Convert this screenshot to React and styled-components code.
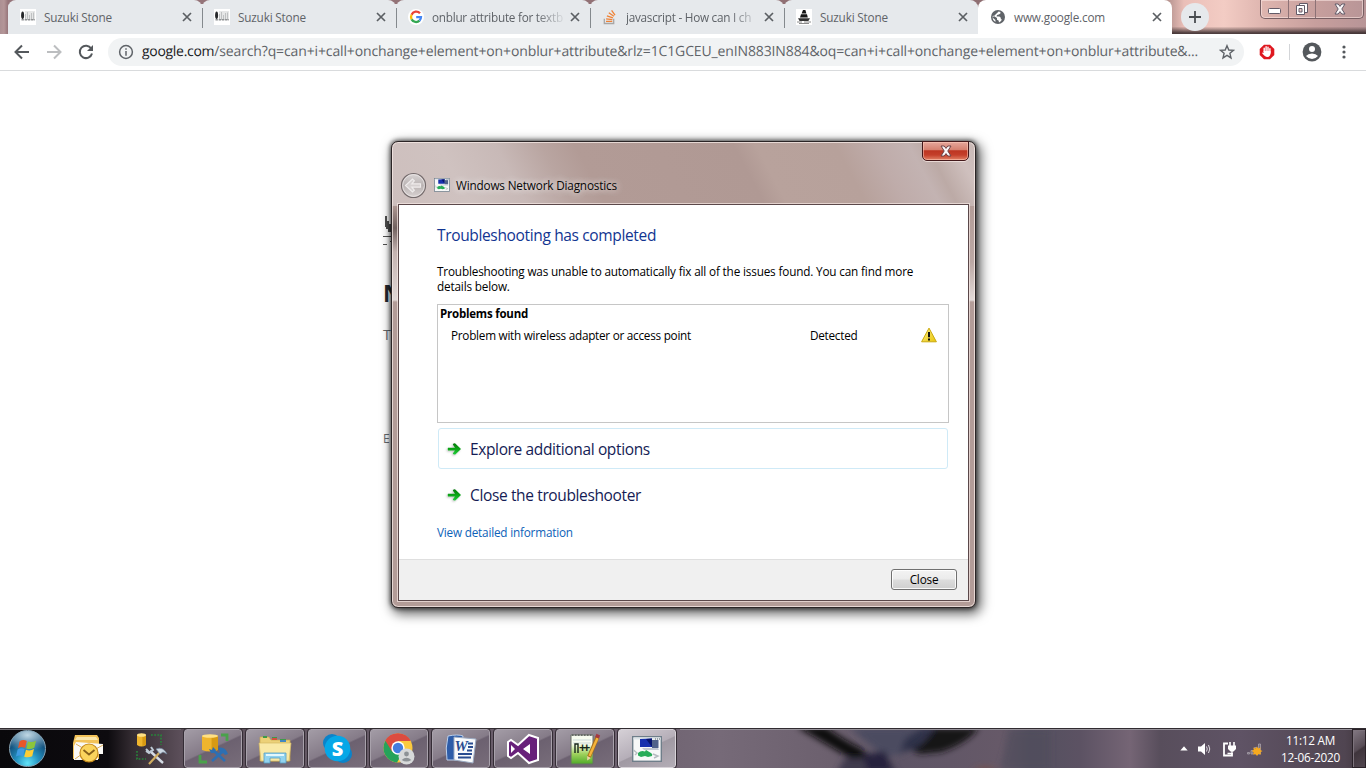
import React from "react";
import styled, { createGlobalStyle, css } from "styled-components";

const GlobalStyle = createGlobalStyle`
  * { box-sizing: border-box; }
  html, body { margin: 0; padding: 0; overflow: hidden; background: #fff; }
  body { font-family: "Open Sans", "Noto Sans", sans-serif; font-size: 11.75px; letter-spacing: -0.18px; }
  svg { display: block; flex: none; }
`;

const Desktop = styled.div`
  position: relative;
  width: 1366px;
  height: 768px;
  display: flex;
  flex-direction: column;
  overflow: hidden;
  background: #fff;
`;

/* Browser tabs */

const TabStrip = styled.div`
  height: 34px;
  flex: none;
  display: flex;
  padding-left: 8px;
  background:
    linear-gradient(to bottom, transparent 78%, rgba(50, 38, 40, 0.85) 97%) 1164px 0 / 202px 34px no-repeat,
    linear-gradient(to right, #a98885, #eabfb8 20px, #f3ccc4 60px, #ddb4ae 50%, #c79f9d 75%, #b89597) 1164px 0 / 202px 34px no-repeat,
    linear-gradient(to right, #ac9093, #b49698 4px, #96757a 8px, #8d6d70 1166px);
`;

const Tab = styled.div`
  position: relative;
  width: 194px;
  height: 34px;
  flex: none;
  display: flex;
  align-items: center;
  padding: 0 8px 0 12px;
  border-radius: 8px 8px 0 0;
  color: #5f6368;
  background: ${(p) => (p.$active ? "#fff" : "#e6e9ec")};
  ${(p) =>
    p.$divided &&
    css`
      &::after {
        content: "";
        position: absolute;
        right: -1px;
        top: 8px;
        width: 1px;
        height: 20px;
        background: #84898d;
        z-index: 1;
      }
    `}
`;

const TabGroup = styled.div`
  display: flex;
  width: 970px;
  border-radius: 8px 8px 8px 0;
  background: linear-gradient(to bottom, transparent 4px, #e6e9ec 4px);
`;

const Favicon = styled.span`
  width: 16px;
  height: 16px;
  margin-right: 8px;
  flex: none;
`;

const TabTitle = styled.span`
  flex: 1;
  white-space: nowrap;
  line-height: 18px;
  ${(p) => p.$fade && css`
    letter-spacing: -0.26px;
    mask-image: linear-gradient(to right, #000 104px, rgba(0, 0, 0, 0.15) 130px);
  `}
`;

const TabClose = styled.svg`
  width: 10px;
  height: 10px;
  margin-left: 6px;
  margin-right: 2px;
  stroke: #5b5f63;
  stroke-width: 1.7;
`;

const NewTab = styled.div`
  width: 28px;
  height: 28px;
  border-radius: 50%;
  margin: 3px 0 0 9px;
  background: #e6e9ec;
  display: flex;
  align-items: center;
  justify-content: center;
`;

const CaptionButtons = styled.div`
  display: flex;
  height: 19px;
  margin-left: 51px;
  border: 1px solid #785f63;
  border-top: 0;
  border-radius: 0 0 5px 5px;
  box-shadow: inset 0 0 0 1px rgba(255, 235, 232, 0.55);
`;

const CaptionButton = styled.div`
  width: ${(p) => p.$w}px;
  padding-top: ${(p) => p.$drop || 0}px;
  display: flex;
  align-items: center;
  justify-content: center;
  border-right: ${(p) => (p.$last ? "0" : "1px solid #8d7276")};
`;

/* Address bar */

const AddressBar = styled.div`
  height: 37px;
  flex: none;
  display: flex;
  align-items: center;
  padding-left: 14px;
  background: #fff;
  border-bottom: 1px solid #d9dbdd;
`;

const NavIcons = styled.div`
  display: flex;
  gap: 16px;
  width: 94px;
`;

const Omnibox = styled.div`
  width: 1136px;
  height: 28px;
  border-radius: 14px;
  display: flex;
  align-items: center;
  padding: 0 9px 0 10px;
  background: #f1f3f4;
`;

const Url = styled.div`
  flex: 1;
  margin-left: 8px;
  font-size: 14px;
  letter-spacing: -0.13px;
  line-height: 20px;
  white-space: nowrap;
  text-rendering: geometricPrecision;
  color: #5f6368;
`;

const UrlHost = styled.span`
  color: #202124;
  letter-spacing: -0.3px;
`;

const Extension = styled.div`
  display: flex;
  align-items: center;
  margin-left: 15px;
`;

const ToolbarRule = styled.div`
  width: 1px;
  height: 16px;
  margin: 0 12px 0 14px;
  background: #d3d5d8;
`;

const MenuDots = styled.svg`
  margin-left: 20px;
`;

/* Page behind the dialog */

const Page = styled.main`
  flex: 1;
  padding: 145px 0 0 383px;
  display: flex;
  flex-direction: column;
`;

const PageTitle = styled.div`
  margin-top: 29px;
  font-size: 23px;
  line-height: 36px;
  font-weight: 700;
  color: #24292f;
`;

const PageText = styled.div`
  margin-top: ${(p) => p.$top}px;
  font-size: ${(p) => p.$size}px;
  line-height: 20px;
  color: #66696c;
`;

/* Dialog window */

const Dialog = styled.section`
  position: absolute;
  left: 391px;
  top: 141px;
  width: 585px;
  height: 467px;
  display: flex;
  flex-direction: column;
  padding: 0 6px 6px;
  border: 1px solid #2b2526;
  border-radius: 7px;
  background:
    linear-gradient(to bottom, transparent 62px, rgba(60, 50, 50, 0.55) 86px, rgba(214, 202, 202, 0.5) 110px, rgba(235, 229, 228, 0.8) 158px, #b39c98 160px) 0 0 / 7px 100% no-repeat,
    linear-gradient(to bottom, transparent 60px, rgba(200, 185, 183, 0.4) 120px, rgba(235, 229, 228, 0.85) 158px, #b39c98 160px) 100% 0 / 7px 100% no-repeat,
    linear-gradient(to bottom, transparent 64px, #b39c97 160px) 0 0 / 100% 100% no-repeat,
    linear-gradient(62deg, #cdbfbd 0, #cfc2c0 70px, #c8b9b7 120px, #b9a5a1 160px, #b29b96 190px, #b09994 330px, #b8a29c 350px, #b7a19b 420px, #bfacaa 455px, #c3b3b2 485px, #bcaaa6 500px, #cfc0be 525px, #c9b9b6 100%) 0 0 / 100% 64px no-repeat,
    #b39c97;
  box-shadow:
    inset 0 0 0 1px rgba(247, 235, 231, 0.75),
    0 0 4px 1px rgba(0, 0, 0, 0.6),
    3px 4px 12px 2px rgba(0, 0, 0, 0.6);
`;

const TitleBar = styled.header`
  height: 62px;
  flex: none;
  display: flex;
  align-items: flex-end;
  padding: 0 0 5px 2px;
`;

const DialogClose = styled.div`
  position: absolute;
  right: 6px;
  top: -1px;
  width: 47px;
  height: 20px;
  display: flex;
  align-items: center;
  justify-content: center;
  border: 1px solid #43181a;
  border-radius: 0 0 5px 5px;
  background: linear-gradient(#e5a79b, #d57f6e 45%, #bd3522 48%, #c43f2a 72%, #e28267);
  box-shadow: inset 0 0 0 1px rgba(255, 205, 190, 0.55), 0 1px 0 rgba(255, 240, 235, 0.65);
`;

const TitleIcon = styled.div`
  margin: 0 6px 7px 7px;
`;

const DialogTitle = styled.div`
  line-height: 18px;
  margin-bottom: 5px;
  letter-spacing: -0.17px;
  color: #080808;
  text-shadow: 0 0 7px rgba(255, 255, 255, 0.8), 0 0 10px rgba(255, 255, 255, 0.6);
`;

const DialogPane = styled.div`
  flex: 1;
  display: flex;
  flex-direction: column;
  border: 1px solid #5b484a;
  background: #fff;
  box-shadow: 0 0 0 1px rgba(247, 232, 228, 0.7);
`;

const DialogBody = styled.div`
  height: 354px;
  padding: 18px 19px 0 38px;
  color: #000;
`;

const Heading = styled.h1`
  margin: 0;
  font-weight: 400;
  font-size: 15.5px;
  line-height: 25px;
  letter-spacing: -0.35px;
  color: #123591;
`;

const Message = styled.p`
  margin: 16px 0 10px;
  line-height: 15px;
  letter-spacing: -0.165px;
`;

const ProblemBox = styled.div`
  height: 119px;
  border: 1px solid #c6c6c6;
  padding-left: 2px;
`;

const ProblemHeading = styled.div`
  font-weight: 700;
  line-height: 18px;
  font-size: 11.5px;
  letter-spacing: -0.22px;
`;

const ProblemRow = styled.div`
  display: grid;
  grid-template-columns: 359px 111px 16px;
  align-items: center;
  margin-top: 3px;
  padding-left: 11px;
  line-height: 18px;
  letter-spacing: -0.26px;
`;

const CommandLink = styled.div`
  height: ${(p) => (p.$focused ? 41 : 39)}px;
  margin: ${(p) => (p.$focused ? "5px 1px 0 1px" : "6px 1px 0 1px")};
  padding-left: 7px;
  display: flex;
  align-items: center;
  border: 1px solid ${(p) => (p.$focused ? "#cfeaf7" : "transparent")};
  border-radius: 3px;
  font-size: 15.5px;
  letter-spacing: -0.365px;
  color: #151c55;
`;

const ArrowIcon = styled.svg`
  margin-right: 7px;
  filter: drop-shadow(-1px 1px 1px rgba(0, 0, 0, 0.25));
`;

const DetailLink = styled.div`
  margin-top: 9px;
  line-height: 18px;
  letter-spacing: -0.2px;
  color: #0d62b8;
`;

const DialogFooter = styled.footer`
  flex: 1;
  display: flex;
  justify-content: flex-end;
  padding: 9px 11px 0 0;
  background: #f0f0f0;
  border-top: 1px solid #dfdfdf;
`;

const PushButton = styled.div`
  width: 66px;
  height: 21px;
  display: flex;
  align-items: center;
  justify-content: center;
  border: 1px solid #707070;
  border-radius: 3px;
  line-height: 17px;
  padding-bottom: 1px;
  background: linear-gradient(#f3f3f3, #ebebeb 49%, #dddddd 51%, #cfcfcf);
  box-shadow: inset 0 0 0 1px rgba(255, 255, 255, 0.85);
  color: #000;
`;

/* Taskbar */

const Taskbar = styled.footer`
  position: relative;
  isolation: isolate;
  height: 40px;
  flex: none;
  display: flex;
  border-top: 1px solid #312c31;
  overflow: hidden;
  background: linear-gradient(to right, #09080b 0, #0d0b0f 108px, #332b31 132px, #5b4e59 180px, #645864 300px, #6b5f6d 600px, #766a78 720px, #6c606e 830px, #5e5566 900px, #665968 1000px, #53505f 1030px, #5c5263 1080px, #756575 1130px, #584e5c 1160px, #5f5365 1240px, #504551 1345px, #3e343b 1366px);
`;

const Wallpaper = styled.svg`
  position: absolute;
  left: 680px;
  top: 0;
  z-index: -1;
  border-top: 1px solid #97929a;
`;

const Launcher = styled.div`
  width: ${(p) => p.$w}px;
  flex: none;
  display: flex;
  justify-content: center;
  align-items: center;
  box-shadow: inset 0 1px 0 #6f6b70;
`;

const StartOrb = styled.div`
  width: 37px;
  height: 37px;
  border-radius: 50%;
  display: flex;
  align-items: center;
  justify-content: center;
  border: 1px solid #85a3b5;
  background:
    radial-gradient(ellipse 70% 45% at 50% 12%, rgba(230, 246, 252, 0.8), rgba(255, 255, 255, 0)),
    radial-gradient(circle at 50% 92%, #62e3f7 0, #2391c0 32%, #14537f 62%, #3d6f90 100%);
`;

const TaskButtons = styled.div`
  display: flex;
  gap: 4px;
  height: 39px;
  margin-left: 3px;
`;

const TaskButton = styled.div`
  width: 58px;
  height: 39px;
  display: flex;
  align-items: center;
  justify-content: center;
  border: 1px solid ${(p) => (p.$active ? "#d8d3d9" : "#a8a1ab")};
  outline: 1px solid #342c35;
  border-radius: 3px;
  background: ${(p) =>
    p.$active
      ? "linear-gradient(155deg, #d5d0d6, #b5aeb8 50%, #a099a3 52%, #b3adb6)"
      : "linear-gradient(155deg, #a39ca6, #857b88 48%, #6c6170 51%, #786d7a)"};
`;

const Tray = styled.div`
  flex: 1;
  display: flex;
  align-items: center;
  justify-content: flex-end;
`;

const TrayIcons = styled.div`
  display: flex;
  align-items: center;
  gap: 8px;
`;

const Clock = styled.div`
  width: 59px;
  margin: 0 12px 0 18px;
  text-align: center;
  line-height: 17px;
  letter-spacing: -0.25px;
  white-space: nowrap;
  color: #fff;
`;

const ShowDesktop = styled.div`
  width: 14px;
  height: 39px;
  border: 1px solid #2a2228;
  box-shadow: inset 1px 1px 0 #7d737c;
  background: linear-gradient(145deg, #837983, #574c55 50%, #3f353c 55%, #51464f);
`;

/* Icons */

const StoneIcon = () => (
  <svg width="16" height="16">
    <rect width="16" height="16" fill="#fff" />
    <path d="M5 2H15V11H5Z" fill="#e6e7e7" />
    <ellipse cx="2.6" cy="6.2" rx="1.5" ry="3.8" fill="#26282a" />
    <path d="M5.5 11V5M7.5 11V3M9.5 11V6M11.5 11V4M13.5 11V3.5" stroke="#bfc1c2" strokeWidth="1" />
    <path d="M1.5 10.8H15" stroke="#8f9193" strokeWidth="1.4" strokeDasharray="2.4 .8" />
  </svg>
);

const GoogleIcon = () => (
  <svg width="16" height="16">
    <circle cx="8" cy="8" r="8" fill="#fff" />
    <g fill="none" strokeWidth="2.3">
      <path d="M12 4.3A5 5 0 0 0 3.6 5.7" stroke="#ea4335" />
      <path d="M3.6 5.7A5 5 0 0 0 3.6 10.4" stroke="#fbbc05" />
      <path d="M3.6 10.4A5 5 0 0 0 11.5 11.6" stroke="#34a853" />
      <path d="M11.5 11.6A4.9 4.9 0 0 0 13 8.1H8.2" stroke="#4285f4" />
    </g>
  </svg>
);

const StackIcon = () => (
  <svg width="16" height="16" fill="none">
    <path d="M2.3 9.8V14.5H11.7V9.8" stroke="#a8a6a5" strokeWidth="1.3" />
    <path d="M4 12.3H10.3M4.1 9.8L10.4 10.6M4.9 6.8L10.9 8.9M6.8 3.7L11.9 7.2M9.6 1.4L13 6.2" stroke="#ef8236" strokeWidth="1.3" />
  </svg>
);

const ShipIcon = () => (
  <svg width="16" height="16">
    <rect width="16" height="16" fill="#fff" />
    <path d="M7 1H9.4L10.4 4.6H5.6ZM5 5.2H11L11.8 8.4H4Z" fill="#151515" />
    <path d="M2 9.2H14L12.4 12H3.6Z" fill="#333" />
    <path d="M1 13H6M8 13H15M3 14.5H13" stroke="#8a8a8a" fill="none" />
  </svg>
);

const GlobeIcon = () => (
  <svg width="16" height="16">
    <circle cx="8" cy="8" r="7" fill="#5f6368" />
    <path d="M8.6 2.5L10.4 3V4.4L8.8 5.6L7 6L6.6 7.4H9.4L10.8 8.8V10.2L12 10.6A5.6 5.6 0 0 1 9 13.4L8.6 11.4L7 10.8V9L3 6.6A5.5 5.5 0 0 0 2.5 8.4L5.4 11V13A5.6 5.6 0 0 1 2.5 8.4" fill="#fff" />
  </svg>
);

const NetworkWindowIcon = ({ size = 15 }) => (
  <svg width={size} height={(size * 13) / 15} viewBox="0 0 30 26">
    <rect x=".7" y=".7" width="28.6" height="24.6" fill="#f7f8f8" stroke="#6f7e8a" strokeWidth="1.4" />
    <path d="M1.5 2.5H28.5" stroke="#dfe5e9" strokeWidth="2" />
    <path d="M23 3H28" stroke="#53616b" strokeDasharray="1 1" />
    <path d="M8 3L20 2.5V11L8 11Z" fill="#1730ae" />
    <path d="M14 3L20 2.5V11Z" fill="#07146e" />
    <path d="M20 4H26.5V12H20Z" fill="#51628a" />
    <path d="M10 12H26L27 14H12Z" fill="#c3c9d2" />
    <path d="M6 17Q9 14 13 15.5L14 14L19 17Q21 18 20 20L16 21L13 20L9 21L6 19.5Z" fill="#27ac58" />
    <path d="M1.5 14L5 17L3 19M21 18L26 20L22 22" stroke="#b5bbc0" fill="none" strokeWidth="1.4" />
  </svg>
);

const GreenArrow = () => (
  <ArrowIcon width="17" height="16" viewBox="0 0 17 16">
    <defs>
      <linearGradient id="arrowFill" x1="0" y1="0" x2="0" y2="1">
        <stop offset="0" stopColor="#057a0b" />
        <stop offset=".5" stopColor="#0ba516" />
        <stop offset="1" stopColor="#21ce3b" />
      </linearGradient>
    </defs>
    <path d="M2 6.8H9L6.8 3.4Q7.8 1.9 9.3 2.5L15 8L9.3 13.5Q7.5 13.9 6.8 12.6L9 9.5H2Q1.5 8 2 6.8Z" fill="url(#arrowFill)" />
  </ArrowIcon>
);

const WarningIcon = () => (
  <svg width="16" height="16">
    <defs>
      <linearGradient id="warnFill" x1="0" y1="0" x2="1" y2="1">
        <stop offset="0" stopColor="#fff28a" />
        <stop offset="1" stopColor="#e8c408" />
      </linearGradient>
    </defs>
    <path d="M8 1.1L15.4 14.8H.6Z" fill="url(#warnFill)" stroke="#c9a90f" strokeLinejoin="round" />
    <path d="M8 5V10.3M8 11.6V13.5" stroke="#111" strokeWidth="2" />
  </svg>
);

const CrossGlyph = ({ outline }) => (
  <svg width="14" height="12" viewBox="0 0 14 12">
    <path d="M2 1H5.2L7 3.4L8.8 1H12L8.8 6L12 11H8.8L7 8.6L5.2 11H2L5.2 6Z" fill="#fbf8f9" stroke={outline} />
  </svg>
);

const WindowsFlag = () => (
  <svg width="25" height="24" viewBox="0 0 25 24">
    <path d="M4.5 4.5Q8 1.8 11.8 4L10 11Q6.5 9 3 11.2Z" fill="#e8562a" />
    <path d="M13 4.4Q17 6 21 3.7L19.3 10.8Q15.2 12.8 11.3 11.4Z" fill="#8cc63b" />
    <path d="M2.6 12.4Q6.3 10.2 9.7 12.3L7.9 19.4Q4.5 17.5 1 19.6Z" fill="#3e9be2" />
    <path d="M11 12.8Q14.9 14.3 19 12.1L17.2 19.2Q13.2 21.1 9.2 19.8Z" fill="#fccd35" />
  </svg>
);

const OutlookIcon = () => (
  <svg width="32" height="30" viewBox="0 0 32 30">
    <path d="M3 1H25L27 4V25H1V9Z" fill="#f3c35a" />
    <path d="M5 3H24L26 6H3Z" fill="#fbe7ac" />
    <path d="M4 8L31 10V20H26V26H2V12Z" fill="#faf9f6" />
    <path d="M4 10L14 16M31 11L22 16M3 25L10 20" stroke="#dcae58" fill="none" />
    <circle cx="17" cy="19" r="9" fill="#fbd45d" stroke="#c58a1c" strokeWidth="1.2" />
    <path d="M11.5 16L17 20.5L22.5 16" stroke="#86601b" strokeWidth="1.8" fill="none" />
  </svg>
);

const Cylinder = ({ x, y, w, h }) => (
  <g>
    <path d={`M${x} ${y}V${y + h}Q${x + w / 2} ${y + h + 3} ${x + w} ${y + h}V${y}Z`} fill="#efb52d" />
    <path d={`M${x + w * 0.6} ${y}V${y + h + 1}L${x + w} ${y + h}V${y}Z`} fill="#d89a13" />
    <ellipse cx={x + w / 2} cy={y} rx={w / 2} ry="1.8" fill="#ffe084" />
  </g>
);

const SqlToolsIcon = () => (
  <svg width="32" height="32" viewBox="0 0 32 32">
    <Cylinder x={1} y={2} w={9} h={10} />
    <path d="M15 2H25V12M1 18V26H10" stroke="#27863a" strokeWidth="1.6" strokeDasharray="1.8 1.4" fill="none" />
    <path d="M14 18L27 30" stroke="#d5dce5" strokeWidth="2.4" />
    <path d="M10 16L13 19M15 14L17 17L13 20L10 18" stroke="#becad5" strokeWidth="2" fill="none" />
    <path d="M13 31L25 18" stroke="#d0ad60" strokeWidth="2.2" />
    <path d="M20 16Q27 13 31 21L27 19L24 21Z" fill="#cdd8e3" stroke="#71849a" strokeWidth=".7" />
  </svg>
);

const SsmsIcon = () => (
  <svg width="31" height="31" viewBox="0 0 31 31">
    <Cylinder x={4} y={3} w={16} h={14} />
    <path d="M23 2H29V8M2 22V29H9" stroke="#4aa14b" strokeWidth="2.8" fill="none" />
    <path d="M15 17L27 28M14 28L25 18" stroke="#2d6fb2" strokeWidth="2.6" />
    <path d="M11 16L14 17L15 14L18 17L16 20H13ZM20 15Q27 13 30 21L27 22L25 20L23 21Z" fill="#2d6fb2" />
  </svg>
);

const ExplorerIcon = () => (
  <svg width="34" height="30" viewBox="0 0 34 30">
    <path d="M2 3H11L13 6H32V27H2Z" fill="#ecd178" stroke="#c7a64c" strokeWidth=".7" />
    <path d="M5 3H9M14 4H19M22 6H28" stroke="#3e9a49" strokeWidth="2" />
    <path d="M14 5H19" stroke="#d4513c" strokeWidth="2" />
    <path d="M22 7H28" stroke="#4488c0" strokeWidth="2" />
    <path d="M1 9H33L31 27H3Z" fill="#f9e9a6" stroke="#d4b963" strokeWidth=".7" />
    <path d="M6 29V19H28V29H22V24H12V29Z" fill="#92d3ef" stroke="#559dc3" strokeWidth=".8" />
    <path d="M8 21H26" stroke="#e2f7fd" strokeWidth="2" />
  </svg>
);

const SkypeLetter = styled.text`
  font: 800 20px "Open Sans", sans-serif;
  fill: #fff;
`;

const SkypeIcon = () => (
  <svg width="31" height="31" viewBox="0 0 31 31">
    <circle cx="10" cy="10" r="9" fill="#0b83c9" />
    <circle cx="21" cy="21" r="9" fill="#0b83c9" />
    <circle cx="15.5" cy="15.5" r="12.8" fill="#05a7e7" />
    <SkypeLetter x="15.5" y="22.6" textAnchor="middle">S</SkypeLetter>
  </svg>
);

const ChromeIcon = () => (
  <svg width="32" height="32" viewBox="0 0 32 32">
    <circle cx="15" cy="15" r="14.5" fill="#fbca3e" />
    <path d="M15 15L2.4 7.8A14.5 14.5 0 0 1 27.6 7.8H15Z" fill="#dc4c3f" />
    <path d="M2.4 7.8A14.5 14.5 0 0 0 14 29.5L20 19L15 15Z" fill="#25a35a" />
    <path d="M2.4 7.8L9 18.5L15 15V8H27.6A14.5 14.5 0 0 0 2.4 7.8" fill="#dc4c3f" />
    <circle cx="15" cy="15" r="6.7" fill="#fff" />
    <circle cx="15" cy="15" r="5.2" fill="#437ddf" />
    <circle cx="23.5" cy="23.5" r="8" fill="#d7d9da" />
    <circle cx="23.5" cy="21" r="2.4" fill="#8d9296" />
    <path d="M18.7 27Q23.5 22.5 28.3 27Q23.5 30.2 18.7 27Z" fill="#8d9296" />
  </svg>
);

const WordLetter = styled.text`
  font: italic 700 15px "Liberation Serif", serif;
  fill: #294c90;
`;

const WordIcon = () => (
  <svg width="32" height="30" viewBox="0 0 32 30">
    <path d="M3 2Q13 0 18 2L14 26H2Q0 14 3 2Z" fill="#2d5ca8" stroke="#bdd0eb" />
    <path d="M9 3L31 5L28 29L9 26Z" fill="#f8fafc" stroke="#9baac2" />
    <WordLetter x="9.5" y="17">W</WordLetter>
    <path d="M23 9.5H28M23 13H28M22 16.5H27M13 20H27M13 23.5H26" stroke="#294c90" strokeWidth="1.8" />
  </svg>
);

const VisualStudioIcon = () => (
  <svg width="34" height="32" viewBox="0 0 34 32">
    <path d="M23 2L32 5V27L23 30L12 20L5 25L2 23V9L5 7L12 12Z" fill="#68217a" stroke="#fff" strokeWidth="2" />
    <path d="M5 12L9 16L5 20ZM24 11V21L17 16Z" fill="#fff" />
  </svg>
);

const NotepadLetter = styled.text`
  font: 700 12px "Liberation Sans", sans-serif;
  fill: #17251a;
`;

const NotepadIcon = () => (
  <svg width="32" height="32" viewBox="0 0 32 32">
    <defs>
      <linearGradient id="noteFill" x1="0" y1="0" x2="0" y2="1">
        <stop offset=".3" stopColor="#f7fbef" />
        <stop offset=".65" stopColor="#a0d25e" />
        <stop offset="1" stopColor="#4fab28" />
      </linearGradient>
    </defs>
    <path d="M2 2H24V31H2Z" fill="url(#noteFill)" stroke="#696e66" />
    <path d="M3 2H23" stroke="#686b68" strokeWidth="2" strokeDasharray="1.5 1.5" />
    <path d="M4 7H22M4 10H22" stroke="#b8cbd2" strokeWidth=".7" />
    <path d="M6 20V11H9V20" stroke="#17251a" strokeWidth="1.4" fill="none" />
    <NotepadLetter x="10" y="19" textLength="11">++</NotepadLetter>
    <path d="M28.5 4L20 24" stroke="#a86d1c" strokeWidth="4" />
    <path d="M28.5 5L20.5 23" stroke="#f4b43b" strokeWidth="2.4" />
    <path d="M26.8 2.4L30.5 4" stroke="#a63941" strokeWidth="3.4" />
    <path d="M18.2 23V27.5L21.8 25Z" fill="#ead1a5" />
  </svg>
);

const tabs = [
  { title: "Suzuki Stone", Icon: StoneIcon },
  { title: "Suzuki Stone", Icon: StoneIcon },
  { title: "onblur attribute for textb", Icon: GoogleIcon, fade: true },
  { title: "javascript - How can I ch", Icon: StackIcon, fade: true },
  { title: "Suzuki Stone", Icon: ShipIcon },
];

const BrowserTab = ({ title, Icon, fade, active, divided }) => (
  <Tab $active={active} $divided={divided}>
    <Favicon><Icon /></Favicon>
    <TabTitle $fade={fade}>{title}</TabTitle>
    <TabClose viewBox="0 0 10 10"><path d="M1 1L9 9M9 1L1 9" /></TabClose>
  </Tab>
);

const taskIcons = [SsmsIcon, ExplorerIcon, SkypeIcon, ChromeIcon, WordIcon, VisualStudioIcon, NotepadIcon];

export default function App() {
  return (
    <Desktop>
      <GlobalStyle />
      <TabStrip>
        <TabGroup>
          {tabs.map((tab, i) => (
            <BrowserTab key={i} {...tab} divided={i < tabs.length - 1} />
          ))}
        </TabGroup>
        <BrowserTab title="www.google.com" Icon={GlobeIcon} active />
        <NewTab>
          <svg width="12" height="12" viewBox="0 0 12 12"><path d="M6 0V12M0 6H12" stroke="#484c50" strokeWidth="1.8" /></svg>
        </NewTab>
        <CaptionButtons>
          <CaptionButton $w={28} $drop={4}>
            <svg width="13" height="6"><rect x=".5" y=".5" width="12" height="5" rx="1" fill="#fff" stroke="#625b68" /></svg>
          </CaptionButton>
          <CaptionButton $w={27}>
            <svg width="12" height="12" viewBox="0 0 12 12">
              <path d="M3.5.5H11.5V9.5H3.5Z" fill="#fff" stroke="#625b68" />
              <path d="M.5 2.5H8.5V11.5H.5Z" fill="#fff" stroke="#625b68" />
              <path d="M3 5.5H6V9H3Z" fill="#e9c9c5" stroke="#625b68" />
            </svg>
          </CaptionButton>
          <CaptionButton $w={47} $last><CrossGlyph outline="#625b68" /></CaptionButton>
        </CaptionButtons>
      </TabStrip>

      <AddressBar>
        <NavIcons>
          <svg width="16" height="16" fill="none" stroke="#54585c" strokeWidth="2"><path d="M15 8H2M8 1.5L1.5 8L8 14.5" /></svg>
          <svg width="16" height="16" fill="none" stroke="#bcbec0" strokeWidth="2"><path d="M1 8H14M8 1.5L14.5 8L8 14.5" /></svg>
          <svg width="16" height="16" fill="none" stroke="#54585c" strokeWidth="2">
            <path d="M13.2 4.5A6.2 6.2 0 1 0 14 9.5" />
            <path d="M15 1V7H9Z" fill="#54585c" stroke="none" />
          </svg>
        </NavIcons>
        <Omnibox>
          <svg width="16" height="16" fill="none" stroke="#5f6368" strokeWidth="1.5">
            <circle cx="8" cy="8" r="6.4" /><path d="M8 7V11.7M8 4.2V5.8" />
          </svg>
          <Url>
            <UrlHost>google.com</UrlHost>
            /search?q=can+i+call+onchange+element+on+onblur+attribute&amp;rlz=1C1GCEU_enIN883IN884&amp;oq=can+i+call+onchange+element+on+onblur+attribute&amp;...
          </Url>
          <svg width="16" height="16" fill="none" stroke="#5f6368" strokeWidth="1.4">
            <path d="M8 1.7L9.8 6L14.5 6.3L10.9 9.3L12 13.9L8 11.4L4 13.9L5.1 9.3L1.5 6.3L6.2 6Z" />
          </svg>
        </Omnibox>
        <Extension>
          <svg width="16" height="16" viewBox="0 0 16 16">
            <path d="M5 .7H11L15.3 5V11L11 15.3H5L.7 11V5Z" fill="#df1820" />
            <path d="M5.2 8V4.2M7.1 7V2.8M9 7V3.2M10.9 9V4.7" stroke="#fff" strokeWidth="1.4" strokeLinecap="round" />
            <path d="M4.5 7H11.5Q12 13 8.3 13Q6 13 3 8.9Q3.8 8 5 9Z" fill="#fff" />
          </svg>
          <ToolbarRule />
          <svg width="20" height="20" viewBox="0 0 20 20">
            <circle cx="10" cy="10" r="9.4" fill="#54585c" />
            <circle cx="10" cy="7" r="3" fill="#fff" />
            <path d="M4 14Q6 11.5 10 11.5T16 14Q13.5 17 10 17T4 14Z" fill="#fff" />
          </svg>
          <MenuDots width="4" height="16" fill="#54585c">
            <circle cx="2" cy="3" r="1.6" /><circle cx="2" cy="8" r="1.6" /><circle cx="2" cy="13" r="1.6" />
          </MenuDots>
        </Extension>
      </AddressBar>

      <Page>
        <svg width="9" height="30" viewBox="0 0 9 30">
          <path d="M2 0H4V5H6V8H9V16H5V13H3V11H2Z" fill="#505050" />
          <path d="M0 20.5H9M0 28.5H4M7 25.5H9" stroke="#505050" />
        </svg>
        <PageTitle>N</PageTitle>
        <PageText $top={14} $size={14}>T</PageText>
        <PageText $top={84} $size={12}>E</PageText>
      </Page>

      <Dialog>
        <DialogClose><CrossGlyph outline="#6c4246" /></DialogClose>
        <TitleBar>
          <svg width="27" height="27" viewBox="0 0 27 27">
            <defs>
              <linearGradient id="backFill" x1="0" y1="0" x2="0" y2="1">
                <stop offset="0" stopColor="#d9d5d5" />
                <stop offset=".5" stopColor="#bab3b3" />
                <stop offset="1" stopColor="#d9d3d2" />
              </linearGradient>
            </defs>
            <circle cx="13.5" cy="13.5" r="12" fill="url(#backFill)" stroke="#746b6c" strokeWidth="1.2" />
            <circle cx="13.5" cy="13.5" r="10.9" fill="none" stroke="#eee8e8" strokeWidth=".8" />
            <path d="M5.5 13.5L12.5 7L14.3 8.8L11.8 11.8H20.5V15.2H11.8L14.3 18.2L12.5 20Z" fill="#d6d1d1" stroke="#efecec" strokeWidth="1.2" />
          </svg>
          <TitleIcon><NetworkWindowIcon size={16} /></TitleIcon>
          <DialogTitle>Windows Network Diagnostics</DialogTitle>
        </TitleBar>
        <DialogPane>
          <DialogBody>
            <Heading>Troubleshooting has completed</Heading>
            <Message>
              Troubleshooting was unable to automatically fix all of the issues found. You can find more<br />
              details below.
            </Message>
            <ProblemBox>
              <ProblemHeading>Problems found</ProblemHeading>
              <ProblemRow>
                <span>Problem with wireless adapter or access point</span>
                <span>Detected</span>
                <WarningIcon />
              </ProblemRow>
            </ProblemBox>
            <CommandLink $focused><GreenArrow />Explore additional options</CommandLink>
            <CommandLink><GreenArrow />Close the troubleshooter</CommandLink>
            <DetailLink>View detailed information</DetailLink>
          </DialogBody>
          <DialogFooter><PushButton>Close</PushButton></DialogFooter>
        </DialogPane>
      </Dialog>

      <Taskbar>
        <Wallpaper width="686" height="40" viewBox="680 729 686 39">
          <defs>
            <filter id="soft" x="-20%" y="-20%" width="140%" height="140%">
              <feGaussianBlur stdDeviation="3" />
            </filter>
          </defs>
          <g filter="url(#soft)">
            <path d="M850 727H930L905 752L885 756Z" fill="#4b4c61" />
            <path d="M845 757L885 752L900 775H835Z" fill="#3f3b4e" />
            <path d="M862 754L885 750L892 770H868Z" fill="#25223c" />
            <path d="M797 726H826Q842 738 862 748L868 756L852 758Q830 745 797 726Z" fill="#0c0a0c" />
            <path d="M933 727H979Q966 743 941 751L920 753L910 748Q926 744 933 727Z" fill="#171318" />
            <path d="M905 738L922 727H936L918 746L900 752Z" fill="#2f3049" />
            <path d="M1010 729H1050V768H1000Z" fill="#4f4d5c" opacity=".6" />
            <path d="M972 769Q985 763 998 769Z" fill="#80503f" />
          </g>
        </Wallpaper>
        <Launcher $w={54}><StartOrb><WindowsFlag /></StartOrb></Launcher>
        <Launcher $w={68}><OutlookIcon /></Launcher>
        <Launcher $w={59}><SqlToolsIcon /></Launcher>
        <TaskButtons>
          {taskIcons.map((Icon, i) => (
            <TaskButton key={i}><Icon /></TaskButton>
          ))}
          <TaskButton $active><NetworkWindowIcon size={30} /></TaskButton>
        </TaskButtons>
        <Tray>
          <TrayIcons>
            <svg width="8" height="5"><path d="M4 .3L7.7 4.5H.3Z" fill="#fff" /></svg>
            <svg width="18" height="16" viewBox="0 0 18 16">
              <path d="M2 5.5H5L9 2V14L5 10.5H2Z" fill="#fff" />
              <path d="M10.5 5.5Q12 8 10.5 10.5M12.5 4Q15 8 12.5 12" stroke="#e1dce3" fill="none" />
            </svg>
            <svg width="16" height="16" viewBox="0 0 16 16" fill="none">
              <path d="M6 2.5H2V14.5H10V12" stroke="#fff" strokeWidth="1.8" />
              <path d="M8 1V5M12 1V5" stroke="#fff" strokeWidth="1.6" />
              <path d="M6 4.5H14V8L11.5 10.5H8.5L6 8Z" fill="#fff" />
              <path d="M10 10V12.5H5.5" stroke="#fff" strokeWidth="1.3" />
            </svg>
            <svg width="17" height="16" viewBox="0 0 17 16">
              <path d="M1.5 13V11.5H3.5V13ZM5 13V9.5H7V13ZM8.5 13V6.5H10.5V13ZM12.5 13V3H14.5V13Z" fill="#77707d" stroke="#a7a0aa" strokeWidth=".8" />
              <path d="M11 5.5L12.2 7.5L14.5 6.5L14.2 9L16.5 10L14.4 11.2L15 13.5L12.6 13L11 15L9.5 13L7 13.7L7.7 11.3L5.7 10L7.8 8.8L7.2 6.5L9.6 7.4Z" fill="#f6a91f" />
            </svg>
          </TrayIcons>
          <Clock>11:12 AM<br />12-06-2020</Clock>
          <ShowDesktop />
        </Tray>
      </Taskbar>
    </Desktop>
  );
}
